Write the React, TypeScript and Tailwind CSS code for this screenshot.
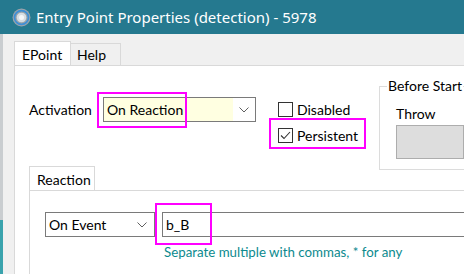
import React from "react";

const TITLE_FONT = { fontFamily: '"Noto Sans", "Open Sans", Arial, sans-serif' };
const BODY_FONT = { fontFamily: 'Lato, "Noto Sans", Arial, sans-serif' };

function AppIcon() {
  return (
    <svg width="19" height="19" viewBox="0 0 18 18" aria-hidden="true">
      <circle cx="9" cy="9" r="8.5" fill="#9aa3aa" />
      <circle cx="9" cy="9" r="6.6" fill="none" stroke="#3d8fd6" strokeWidth="1.6" />
      <circle cx="9" cy="9" r="4.6" fill="#d7dde2" />
      <circle cx="9" cy="9" r="2.4" fill="#f4f6f8" />
    </svg>
  );
}

function Chevron() {
  return (
    <svg width="10" height="6" viewBox="0 0 10 6" aria-hidden="true">
      <path d="M0.5 0.5 L5 5 L9.5 0.5" fill="none" stroke="#606060" strokeWidth="1" />
    </svg>
  );
}

function Checkbox({ label, checked }: { label: string; checked?: boolean }) {
  return (
    <div className="flex items-center gap-[4px]">
      <span className="flex h-[15px] w-[15px] items-center justify-center border border-[#333333] bg-white">
        {checked ? (
          <svg width="11" height="9" viewBox="0 0 11 9" aria-hidden="true">
            <path d="M1 4.5 L4 7.5 L10 1" fill="none" stroke="#333333" strokeWidth="1.1" />
          </svg>
        ) : null}
      </span>
      <span className="text-[14px] leading-none text-black">{label}</span>
    </div>
  );
}

function Highlight({ className }: { className: string }) {
  return <span className={`pointer-events-none absolute border-2 border-[#ff00ff] ${className}`} />;
}

export default function App() {
  return (
    <div className="flex h-[274px] w-[464px] flex-col overflow-hidden bg-[#f0f0f0]" style={BODY_FONT}>
      <div className="flex h-[34px] shrink-0 items-center gap-[5px] bg-[#25798f] pl-[12px]" style={TITLE_FONT}>
        <AppIcon />
        <span className="whitespace-nowrap text-[15px] text-white">Entry Point Properties (detection) - 5978</span>
      </div>

      <div className="flex flex-1">
        <div className="flex w-[3px] flex-col">
          <div className="h-[186px] bg-[#c9cdd0]" />
          <div className="flex-1 bg-[#3aa3ad]" />
        </div>

        <div className="flex flex-1 flex-col pl-[11px] pt-[7px]">
          <div className="flex h-[24px] items-end">
            <div className="-mb-px flex h-[25px] w-[57px] items-center border border-b-0 border-[#d9d9d9] bg-white pl-[7px] text-[14px] text-black">
              EPoint
            </div>
            <div className="flex h-[22px] w-[50px] items-center border-r border-t border-[#d9d9d9] bg-[#f0f0f0] pl-[6px] text-[14px] text-black">
              Help
            </div>
          </div>

          <div className="flex flex-1 flex-col border-l border-t border-[#d9d9d9] bg-white pl-[14px]">
            <div className="flex h-[100px] items-start">
              <div className="relative mt-[31px] flex items-center">
                <span className="w-[74px] text-[14px] text-black">Activation</span>
                <div className="flex h-[25px] w-[153px] items-center border border-[#7a7a7a] bg-white">
                  <div className="flex h-full w-[129px] items-center bg-[#ffffe1] pl-[3px] text-[14px] text-black">
                    On Reaction
                  </div>
                  <div className="flex flex-1 items-center justify-center pt-px">
                    <Chevron />
                  </div>
                </div>
                <Highlight className="left-[68px] top-[-5px] h-[36px] w-[90px]" />
              </div>

              <div className="relative ml-[22px] mt-[36px] flex w-[101px] shrink-0 flex-col gap-[11px]">
                <Checkbox label="Disabled" />
                <Checkbox label="Persistent" checked />
                <Highlight className="left-[-9px] top-[16px] h-[31px] w-[97px]" />
              </div>

              <div className="relative mt-[20px] h-[84px] flex-1 border border-r-0 border-[#dcdcdc]">
                <span className="absolute left-[7px] top-[-10px] whitespace-nowrap bg-white px-px text-[14px] leading-[18px] text-black">
                  Before Start
                </span>
                <div className="flex flex-col pl-[16px] pt-[17px]">
                  <span className="text-[14px] leading-[20px] text-black">Throw</span>
                  <div className="mt-[1px] h-[34px] border border-[#adadad] bg-[#dddddd]" />
                </div>
              </div>
            </div>

            <div className="flex h-[24px] items-end">
              <div className="-mb-px flex h-[25px] w-[66px] items-center border border-b-0 border-[#d9d9d9] bg-white pl-[7px] text-[14px] text-black">
                Reaction
              </div>
            </div>

            <div className="flex flex-1 flex-col border-l border-t border-[#d9d9d9] bg-white pl-[15px] pt-[21px]">
              <div className="flex items-center gap-[7px]">
                <div className="flex h-[25px] w-[110px] items-center justify-between border border-[#7a7a7a] bg-white pl-[3px] pr-[7px] text-[14px] text-black">
                  On Event
                  <Chevron />
                </div>
                <div className="relative flex h-[25px] flex-1 items-center border border-r-0 border-[#7a7a7a] bg-white pl-[3px] text-[14px] text-black">
                  b_B
                  <Highlight className="left-[-8px] top-[-10px] h-[42px] w-[57px]" />
                </div>
              </div>
              <span className="ml-[119px] mt-[7px] whitespace-nowrap text-[13.3px] leading-[16px] text-[#0b8a8e]">
                Separate multiple with commas, * for any
              </span>
            </div>
          </div>
        </div>
      </div>
    </div>
  );
}
